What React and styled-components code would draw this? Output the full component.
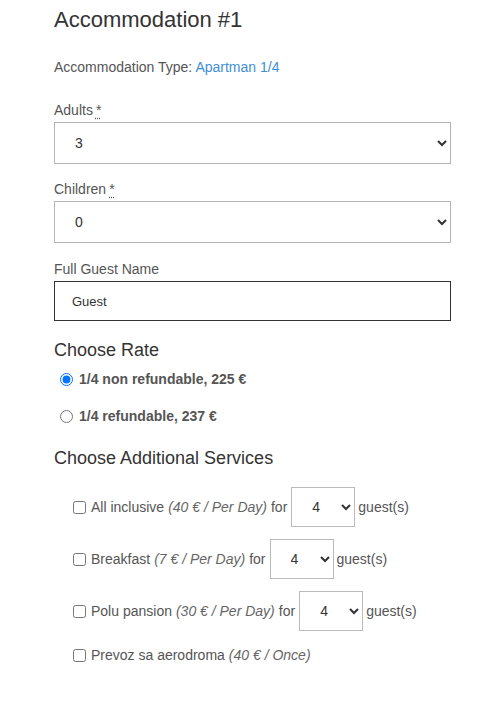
import React, { useEffect, useRef } from "react";
import styled, { createGlobalStyle } from "styled-components";

const Global = createGlobalStyle`
  html, body { margin: 0; padding: 0; background: #fff; }
  body { font-family: "Liberation Sans", Arial, sans-serif; color: #555; }
  * { box-sizing: border-box; }
`;

const Page = styled.div`
  padding: 0 35px 40px 54px;
  width: 486px;
`;

const Title = styled.h2`
  margin: 8px 0 0;
  font-size: 22px;
  line-height: 24px;
  font-weight: 400;
  color: #333;
`;

const TypeRow = styled.p`
  margin: 25px 0 0;
  font-size: 14px;
  line-height: 20px;
  color: #555;
`;

const Link = styled.a`
  color: #3d8fd6;
  text-decoration: none;
`;

const Field = styled.div`
  margin-top: ${(p) => p.$top}px;
  display: flex;
  flex-direction: column;
  gap: 2px;
`;

const Label = styled.label`
  font-size: 14px;
  line-height: 20px;
  color: #555;
`;

const Req = styled.abbr`
  text-decoration: underline dotted;
  text-underline-offset: 3px;
  margin-left: 3px;
`;

const Select = styled.select`
  width: 397px;
  height: 42px;
  padding: 0 12px 0 16px;
  border: 1px solid #b5b5b5;
  border-radius: 0;
  background: #fff;
  font-family: "Liberation Sans", Arial, sans-serif;
  font-size: 14px;
  color: #333;
`;

const Input = styled.input`
  width: 397px;
  height: 40px;
  padding: 0 17px;
  border: 1px solid #333;
  border-radius: 0;
  font-family: "Liberation Sans", Arial, sans-serif;
  font-size: 13px;
  color: #333;
  outline: none;
  caret-color: #000;
`;

const Heading = styled.h3`
  margin: ${(p) => p.$top}px 0 0;
  font-size: 18px;
  line-height: 22px;
  font-weight: 400;
  color: #333;
`;

const RadioRow = styled.label`
  display: flex;
  align-items: center;
  margin-top: ${(p) => p.$top}px;
  height: 20px;
  font-size: 14px;
  font-weight: 700;
  color: #555;
`;

const Radio = styled.input`
  width: 13px;
  height: 13px;
  margin: 0 6px 0 6px;
`;

const ServiceRow = styled.div`
  display: flex;
  align-items: center;
  margin-top: ${(p) => p.$top}px;
  min-height: 20px;
  font-size: 14px;
  color: #555;
`;

const Check = styled.input`
  width: 13px;
  height: 13px;
  margin: 0 5px 0 19px;
`;

const Price = styled.em`
  color: #666;
  margin: 0 4px;
`;

const SmallSelect = styled.select`
  width: 64px;
  height: 40px;
  margin: 0 3px 0 4px;
  padding: 0 6px 0 16px;
  border: 1px solid #bbb;
  border-radius: 0;
  background: #fff;
  font-family: "Liberation Sans", Arial, sans-serif;
  font-size: 14px;
  color: #333;
`;

const services = [
  { name: "All inclusive", price: "(40 € / Per Day)", guests: true, top: 18 },
  { name: "Breakfast", price: "(7 € / Per Day)", guests: true, top: 12 },
  { name: "Polu pansion", price: "(30 € / Per Day)", guests: true, top: 12 },
  { name: "Prevoz sa aerodroma", price: "(40 € / Once)", guests: false, top: 14 },
];

const nums = [0, 1, 2, 3, 4, 5, 6];

export default function App() {
  const nameRef = useRef(null);
  useEffect(() => {
    const el = nameRef.current;
    if (el) {
      el.focus();
      el.setSelectionRange(el.value.length, el.value.length);
    }
  }, []);

  return (
    <Page>
      <Global />
      <Title>Accommodation #1</Title>
      <TypeRow>
        Accommodation Type: <Link href="#">Apartman 1/4</Link>
      </TypeRow>

      <Field $top={23}>
        <Label>
          Adults<Req title="required">*</Req>
        </Label>
        <Select defaultValue="3">
          {nums.map((n) => (
            <option key={n} value={n}>{n}</option>
          ))}
        </Select>
      </Field>

      <Field $top={15}>
        <Label>
          Children<Req title="required">*</Req>
        </Label>
        <Select defaultValue="0">
          {nums.map((n) => (
            <option key={n} value={n}>{n}</option>
          ))}
        </Select>
      </Field>

      <Field $top={16}>
        <Label>Full Guest Name</Label>
        <Input ref={nameRef} defaultValue="Guest" />
      </Field>

      <Heading $top={18}>Choose Rate</Heading>
      <RadioRow $top={8}>
        <Radio type="radio" name="rate" defaultChecked />
        1/4 non refundable, 225 €
      </RadioRow>
      <RadioRow $top={17}>
        <Radio type="radio" name="rate" />
        1/4 refundable, 237 €
      </RadioRow>

      <Heading $top={21}>Choose Additional Services</Heading>
      {services.map((s) => (
        <ServiceRow key={s.name} $top={s.top}>
          <Check type="checkbox" />
          {s.name}
          <Price>{s.price}</Price>
          {s.guests && (
            <>
              for
              <SmallSelect defaultValue="4">
                {nums.slice(1).map((n) => (
                  <option key={n} value={n}>{n}</option>
                ))}
              </SmallSelect>
              guest(s)
            </>
          )}
        </ServiceRow>
      ))}
    </Page>
  );
}
